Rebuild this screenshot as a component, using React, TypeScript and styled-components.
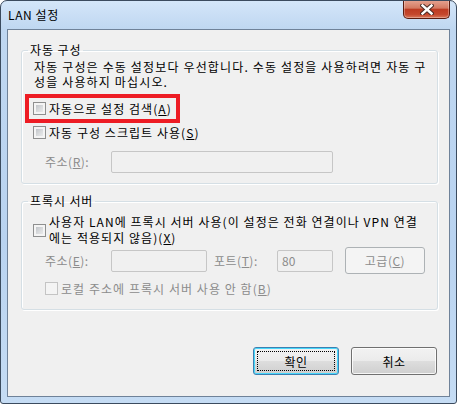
import React from "react";
import styled, { createGlobalStyle } from "styled-components";

const GlobalStyle = createGlobalStyle`
  html, body {
    margin: 0;
    padding: 0;
    background: #ffffff;
  }
  body {
    font-family: "Noto Sans CJK KR", "Liberation Sans", sans-serif;
    font-size: 12px;
    color: #000000;
  }
`;

const Window = styled.div`
  box-sizing: border-box;
  width: 457px;
  height: 404px;
  display: flex;
  flex-direction: column;
  padding: 0 6px 6px;
  border: 1px solid #3b4b5e;
  border-radius: 7px 7px 3px 3px;
  background: linear-gradient(
    180deg,
    #d4e6f9 0px,
    #bfd7f1 28px,
    #b9d3f0 60%,
    #c5dcf4 100%
  );
  overflow: hidden;
`;

const TitleBar = styled.div`
  height: 28px;
  display: flex;
  justify-content: space-between;
  align-items: flex-start;
`;

const Title = styled.span`
  margin: 6px 0 0 1px;
  line-height: 16px;
  letter-spacing: 0.6px;
`;

const CloseButton = styled.div`
  box-sizing: border-box;
  width: 47px;
  height: 19px;
  margin-top: -1px;
  display: flex;
  align-items: center;
  justify-content: center;
  border: 1px solid #5a1c10;
  border-top: none;
  border-radius: 0 0 5px 5px;
  background: linear-gradient(
    180deg,
    #e6a593 0%,
    #d47a62 45%,
    #bd3b22 52%,
    #c4472d 80%,
    #d9775a 100%
  );
  box-shadow: inset 0 0 0 1px rgba(255, 255, 255, 0.3);
`;

const Content = styled.div`
  flex: 1;
  display: flex;
  flex-direction: column;
  border: 1px solid #6f8299;
  background: #f0f0f0;
  padding: 12px 11px 21px 13px;
`;

const Group = styled.fieldset<{ $gap?: number }>`
  margin: ${(p) => p.$gap ?? 0}px 0 0;
  padding: 0 12px 10px;
  min-width: 0;
  border: 1px solid #d5dfe5;
  border-radius: 3px;
  box-shadow: inset 1px 1px 0 #ffffff, 1px 1px 0 #ffffff;
`;

const GroupTitle = styled.legend`
  margin-left: -6px;
  padding: 0 2px;
  line-height: 16px;
  letter-spacing: 0.9px;
`;

const Description = styled.p`
  margin: 1px 0 0;
  line-height: 15px;
  letter-spacing: 1.15px;
  white-space: nowrap;
`;

const OptionRow = styled.label<{ $highlight?: boolean; $top: number; $indent?: number }>`
  box-sizing: border-box;
  width: fit-content;
  min-height: 21px;
  margin: ${(p) => p.$top}px 0 0 ${(p) => (p.$indent ?? 0) - 5}px;
  padding: 0 4px;
  display: flex;
  align-items: center;
  gap: 3px;
  outline: ${(p) => (p.$highlight ? "4px solid #ed1c24" : "none")};
`;

const CheckBox = styled.span<{ $disabled?: boolean }>`
  box-sizing: border-box;
  flex: none;
  width: 13px;
  height: 13px;
  border: 1px solid ${(p) => (p.$disabled ? "#c4c4c4" : "#8e8f8f")};
  background: ${(p) =>
    p.$disabled
      ? "#f4f4f4"
      : "linear-gradient(135deg, #b5b9bf 0%, #dadcde 55%, #f2f2f2 100%)"};
  box-shadow: inset 0 0 0 2px #f4f4f4;
`;

const Text = styled.span<{ $disabled?: boolean }>`
  line-height: 16px;
  letter-spacing: 1.05px;
  white-space: nowrap;
  color: ${(p) => (p.$disabled ? "#8c8c8c" : "#000000")};
`;

const FieldRow = styled.div<{ $top: number }>`
  margin: ${(p) => p.$top}px 0 0 11px;
  display: flex;
  align-items: center;
`;

const FieldLabel = styled.span<{ $width: number; $gap?: number }>`
  width: ${(p) => p.$width}px;
  margin-left: ${(p) => p.$gap ?? 0}px;
  flex: none;
  line-height: 16px;
  letter-spacing: 0.5px;
  color: #8c8c8c;
`;

const TextBox = styled.div<{ $width: number }>`
  box-sizing: border-box;
  width: ${(p) => p.$width}px;
  height: 22px;
  flex: none;
  padding: 0 4px;
  display: flex;
  align-items: center;
  border: 1px solid #c6c6c6;
  border-radius: 2px;
  background: #f0f0f0;
  color: #8c8c8c;
  line-height: 16px;
`;

const SideButton = styled.div`
  box-sizing: border-box;
  width: 86px;
  height: 27px;
  margin-left: 12px;
  display: flex;
  align-items: center;
  justify-content: center;
  border: 1px solid #adb2b5;
  border-radius: 3px;
  background: #f4f4f4;
  color: #8c8c8c;
  letter-spacing: 0.5px;
`;

const ButtonRow = styled.div`
  margin: auto 1px 0 0;
  display: flex;
  justify-content: flex-end;
  gap: 12px;
`;

const Button = styled.div<{ $default?: boolean }>`
  box-sizing: border-box;
  width: 86px;
  height: 28px;
  padding: 3px;
  display: flex;
  border: 1px solid ${(p) => (p.$default ? "#3c7fb1" : "#707070")};
  border-radius: 3px;
  background: linear-gradient(
    180deg,
    #f2f2f2 0%,
    #ebebeb 48%,
    #dddddd 52%,
    #cfcfcf 100%
  );
  box-shadow: inset 0 0 0 1px
    ${(p) => (p.$default ? "#48d8fb" : "rgba(255, 255, 255, 0.8)")};
`;

const ButtonFace = styled.span<{ $focused?: boolean }>`
  flex: 1;
  display: flex;
  align-items: center;
  justify-content: center;
  border: 1px dotted ${(p) => (p.$focused ? "#000000" : "transparent")};
  letter-spacing: 0.5px;
`;

function CloseGlyph() {
  return (
    <svg width="14" height="11" viewBox="0 0 14 11">
      <path
        d="M2.5 1.5 L11.5 9.5 M11.5 1.5 L2.5 9.5"
        stroke="#4a2a24"
        strokeWidth="4.4"
        strokeLinecap="square"
        fill="none"
      />
      <path
        d="M2.5 1.5 L11.5 9.5 M11.5 1.5 L2.5 9.5"
        stroke="#ffffff"
        strokeWidth="2.4"
        strokeLinecap="square"
        fill="none"
      />
    </svg>
  );
}

export default function App() {
  return (
    <>
      <GlobalStyle />
      <Window>
        <TitleBar>
          <Title>LAN 설정</Title>
          <CloseButton>
            <CloseGlyph />
          </CloseButton>
        </TitleBar>
        <Content>
          <Group>
            <GroupTitle>자동 구성</GroupTitle>
            <Description>
              자동 구성은 수동 설정보다 우선합니다. 수동 설정을 사용하려면 자동 구
              <br />
              성을 사용하지 마십시오.
            </Description>
            <OptionRow $highlight $top={9}>
              <CheckBox />
              <Text>
                자동으로 설정 검색(<u>A</u>)
              </Text>
            </OptionRow>
            <OptionRow $top={3}>
              <CheckBox />
              <Text>
                자동 구성 스크립트 사용(<u>S</u>)
              </Text>
            </OptionRow>
            <FieldRow $top={8}>
              <FieldLabel $width={66}>
                주소(<u>R</u>):
              </FieldLabel>
              <TextBox $width={222} />
            </FieldRow>
          </Group>

          <Group $gap={9}>
            <GroupTitle>프록시 서버</GroupTitle>
            <OptionRow $top={5}>
              <CheckBox />
              <Text>
                사용자 LAN에 프록시 서버 사용(이 설정은 전화 연결이나 VPN 연결
                <br />
                에는 적용되지 않음)(<u>X</u>)
              </Text>
            </OptionRow>
            <FieldRow $top={1}>
              <FieldLabel $width={66}>
                주소(<u>E</u>):
              </FieldLabel>
              <TextBox $width={96} />
              <FieldLabel $width={63} $gap={7}>
                포트(<u>T</u>):
              </FieldLabel>
              <TextBox $width={56}>80</TextBox>
              <SideButton>
                고급(<u>C</u>)
              </SideButton>
            </FieldRow>
            <OptionRow $top={4} $indent={12}>
              <CheckBox $disabled />
              <Text $disabled>
                로컬 주소에 프록시 서버 사용 안 함(<u>B</u>)
              </Text>
            </OptionRow>
          </Group>

          <ButtonRow>
            <Button $default>
              <ButtonFace $focused>확인</ButtonFace>
            </Button>
            <Button>
              <ButtonFace>취소</ButtonFace>
            </Button>
          </ButtonRow>
        </Content>
      </Window>
    </>
  );
}
